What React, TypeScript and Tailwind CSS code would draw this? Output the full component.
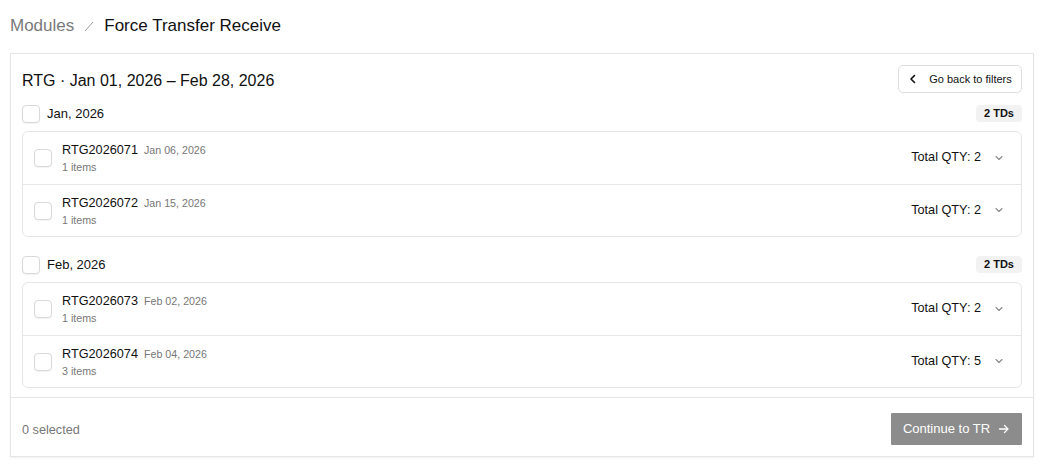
import React from "react";

const groups = [
  {
    label: "Jan, 2026",
    count: "2 TDs",
    rows: [
      { id: "RTG2026071", date: "Jan 06, 2026", items: "1 items", qty: 2 },
      { id: "RTG2026072", date: "Jan 15, 2026", items: "1 items", qty: 2 },
    ],
  },
  {
    label: "Feb, 2026",
    count: "2 TDs",
    rows: [
      { id: "RTG2026073", date: "Feb 02, 2026", items: "1 items", qty: 2 },
      { id: "RTG2026074", date: "Feb 04, 2026", items: "3 items", qty: 5 },
    ],
  },
];

function Box() {
  return <div className="w-[18px] h-[18px] rounded-[4px] border border-[#d9d9d9] bg-white shadow-[0_1px_1px_rgba(0,0,0,0.05)] shrink-0" />;
}

export default function App() {
  return (
    <div className="w-[1054px] h-[473px] bg-white text-[#111] overflow-hidden" style={{ fontFamily: '"Liberation Sans", Arial, sans-serif' }}>
      <div className="pl-[10px] pt-[15px] flex items-center h-[21px] box-content text-[17px] leading-[21px]">
        <span className="text-[#7a7a7a]">Modules</span>
        <svg className="mx-[9px]" width="12" height="12" viewBox="0 0 12 12">
          <path d="M2 11 L10 2" stroke="#9a9a9a" strokeWidth="1" fill="none" />
        </svg>
        <span className="text-[#111]">Force Transfer Receive</span>
      </div>
      <div className="ml-[10px] mt-[17px] w-[1024px] h-[404px] border border-[#e6e6e6] shadow-[0_1px_2px_rgba(0,0,0,0.06)] bg-white flex flex-col">
        <div className="px-[11px] pt-[11px] flex items-center justify-between">
          <div className="text-[16px] text-[#111] pt-[3px]">RTG · Jan 01, 2026 – Feb 28, 2026</div>
          <button className="h-[28px] w-[124px] flex items-center justify-center gap-[11px] rounded-[5px] border border-[#dedede] bg-white text-[11px] text-[#111]">
            <svg width="10" height="10" viewBox="0 0 10 10">
              <path d="M6.5 1.5 L3 5 L6.5 8.5" stroke="#111" strokeWidth="1.6" fill="none" strokeLinecap="round" strokeLinejoin="round" />
            </svg>
            Go back to filters
          </button>
        </div>
        <div className="px-[11px] pt-[12px] flex flex-col gap-[19px]">
          {groups.map((g) => (
            <div key={g.label}>
              <div className="flex items-center justify-between h-[17px]">
                <div className="flex items-center gap-[7px]">
                  <Box />
                  <span className="text-[13px]">{g.label}</span>
                </div>
                <span className="h-[17px] px-[8px] rounded-[4px] bg-[#f2f2f2] text-[11px] font-bold flex items-center">{g.count}</span>
              </div>
              <div className="mt-[9px] border border-[#e6e6e6] rounded-[6px]">
                {g.rows.map((r, i) => (
                  <div key={r.id} className={"h-[52px] flex items-center pl-[11px] pr-[17px] " + (i > 0 ? "border-t border-[#e6e6e6]" : "")}>
                    <Box />
                    <div className="ml-[10px] flex flex-col">
                      <div className="flex items-baseline gap-[6px] leading-[16px]">
                        <span className="text-[12.7px] text-[#111]">{r.id}</span>
                        <span className="text-[10.7px] text-[#777]">{r.date}</span>
                      </div>
                      <span className="text-[10.7px] leading-[14px] text-[#777] mt-[2px]">{r.items}</span>
                    </div>
                    <div className="ml-auto flex items-center gap-[13px]">
                      <span className="text-[12.7px] text-[#111]">Total QTY: {r.qty}</span>
                      <svg width="10" height="10" viewBox="0 0 10 10">
                        <path d="M2 3.5 L5 6.5 L8 3.5" stroke="#888" strokeWidth="1.1" fill="none" strokeLinecap="round" strokeLinejoin="round" />
                      </svg>
                    </div>
                  </div>
                ))}
              </div>
            </div>
          ))}
        </div>
        <div className="mt-auto border-t border-[#e6e6e6] h-[59px] px-[11px] pt-[4px] flex items-center justify-between">
          <span className="text-[12.7px] text-[#777] pt-[3px]">0 selected</span>
          <button className="h-[32px] w-[131px] bg-[#8c8c8c] text-white text-[13px] flex items-center justify-center gap-[8px] rounded-[1px]">
            Continue to TR
            <svg width="12" height="12" viewBox="0 0 12 12">
              <path d="M1.5 6 H10 M6.5 2.5 L10 6 L6.5 9.5" stroke="#fff" strokeWidth="1.3" fill="none" strokeLinecap="round" strokeLinejoin="round" />
            </svg>
          </button>
        </div>
      </div>
    </div>
  );
}
